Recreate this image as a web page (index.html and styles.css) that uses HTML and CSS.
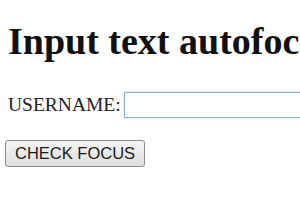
FILE: index.html
```html
<!DOCTYPE html>
<html lang="en">
<head>
	<meta charset="UTF-8">
	<title>Input text autofocus</title>
	<link rel="stylesheet" href="styles.css">
</head>
<body>

<h1>Input text autofocus</h1>

<div class="field">
	<label for="username">USERNAME:</label>
	<input type="text" id="username" class="text-input">
</div>

<div class="actions">
	<button type="button" class="check-button">CHECK FOCUS</button>
</div>

</body>
</html>
```

FILE: styles.css
```css
html, body {
	overflow: hidden;
}

body {
	margin: 0;
	padding: 0 0 0 8px;
	font-family: "Liberation Serif", "Times New Roman", serif;
	font-size: 19.5px;
	color: #000;
	background: #fff;
}

h1 {
	font-size: 38px;
	font-weight: 700;
	margin: 0;
	padding-top: 19px;
	line-height: 44px;
	white-space: nowrap;
	color: #111;
}

.field {
	margin-top: 28px;
	height: 28px;
	display: flex;
	align-items: center;
	white-space: nowrap;
	color: #222;
}

.text-input {
	flex: none;
	box-sizing: border-box;
	width: 220px;
	height: 26px;
	padding: 1px 3px;
	margin: 0 0 0 3px;
	border: 1px solid #8aabd6;
	border-radius: 1px;
	box-shadow: 0 0 2px #b6cce8;
	outline: none;
	font-family: "Liberation Sans", Arial, sans-serif;
	font-size: 14px;
}

.actions {
	margin-top: 21px;
}

.check-button {
	box-sizing: border-box;
	height: 27px;
	margin-left: -3px;
	padding: 0 9px;
	font-family: "Liberation Sans", Arial, sans-serif;
	font-size: 16.5px;
	color: #1a1a1a;
	background: linear-gradient(#f4f4f4, #dedede);
	border: 1px solid #8c8c8c;
	border-radius: 3px;
}
```
